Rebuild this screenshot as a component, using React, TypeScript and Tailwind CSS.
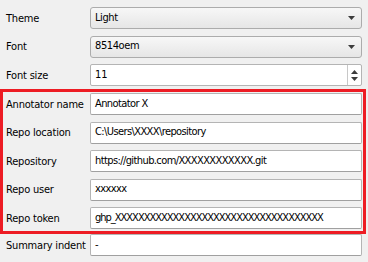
const font = { fontFamily: '"DejaVu Sans Condensed", "DejaVu Sans", sans-serif', fontStretch: "condensed" };

function Label({ text }: { text: string }) {
  return (
    <div className="w-[84px] shrink-0 text-[11px] text-black leading-none whitespace-nowrap tracking-[-0.2px]">
      {text}
    </div>
  );
}

function Combo({ value }: { value: string }) {
  return (
    <div className="flex-1 h-[22px] flex items-center justify-between rounded-[3px] border border-[#acacac] bg-gradient-to-b from-[#f7f7f7] to-[#e6e6e6] pl-[4px] pr-[6px]">
      <span className="text-[11px] text-black tracking-[-0.4px]">{value}</span>
      <svg width="7" height="4" viewBox="0 0 7 4">
        <path d="M0 0H7L3.5 4Z" fill="#3c3c3c" />
      </svg>
    </div>
  );
}

function Field({ value, tight }: { value: string; tight?: boolean }) {
  return (
    <div className="flex-1 min-w-0 h-[22px] flex items-center rounded-[2px] border border-[#b4b4b4] border-b-[#a0a0a0] bg-white pl-[4px] overflow-hidden">
      <span className={tight ? "text-[11px] text-black whitespace-nowrap tracking-[-1px]" : "text-[11px] text-black whitespace-nowrap tracking-[-0.6px]"}>
        {value}
      </span>
    </div>
  );
}

function Spin({ value }: { value: string }) {
  return (
    <div className="flex-1 h-[22px] flex rounded-[2px] border border-[#b4b4b4] bg-white">
      <div className="flex-1 flex items-center pl-[4px] text-[11px] text-black">{value}</div>
      <div className="w-[14px] border-l border-[#c8c8c8] flex flex-col items-center justify-center gap-[3px]">
        <svg width="7" height="4" viewBox="0 0 7 4">
          <path d="M0 4H7L3.5 0Z" fill="#3c3c3c" />
        </svg>
        <svg width="7" height="4" viewBox="0 0 7 4">
          <path d="M0 0H7L3.5 4Z" fill="#3c3c3c" />
        </svg>
      </div>
    </div>
  );
}

function Row({ label, children }: { label: string; children: React.ReactNode }) {
  return (
    <div className="flex items-center h-[22px]">
      <Label text={label} />
      {children}
    </div>
  );
}

export default function App() {
  return (
    <div className="w-[368px] h-[262px] bg-[#f0f0f0] px-[6px] pt-[7px] overflow-hidden" style={font}>
      <div className="flex flex-col gap-[6.5px]">
        <Row label="Theme">
          <Combo value="Light" />
        </Row>
        <Row label="Font">
          <Combo value="8514oem" />
        </Row>
        <Row label="Font size">
          <Spin value="11" />
        </Row>
      </div>
      <div className="ml-[-6px] mr-[-4px] mt-[3px] border-[3px] border-[#ed1c24] pl-[3px] pr-[1px] pt-[1px] pb-[2px] flex flex-col gap-[6.5px]">
        <Row label="Annotator name">
          <Field value="Annotator X" />
        </Row>
        <Row label="Repo location">
          <Field value="C:\Users\XXXX\repository" />
        </Row>
        <Row label="Repository">
          <Field value="https://github.com/XXXXXXXXXXXX.git" />
        </Row>
        <Row label="Repo user">
          <Field value="xxxxxx" />
        </Row>
        <Row label="Repo token">
          <Field value="ghp_XXXXXXXXXXXXXXXXXXXXXXXXXXXXXXXXXXXX" tight />
        </Row>
      </div>
      <div className="mt-0">
        <Row label="Summary indent">
          <Field value="-" />
        </Row>
      </div>
    </div>
  );
}
